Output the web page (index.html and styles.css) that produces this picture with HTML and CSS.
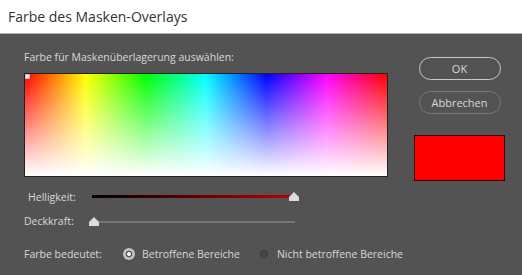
FILE: index.html
```html
<!DOCTYPE html>
<html lang="de">
<head>
  <meta charset="UTF-8">
  <title>Farbe des Masken-Overlays</title>
  <link rel="stylesheet" href="styles.css">
</head>
<body>
  <div class="dialog">
    <div class="titlebar">Farbe des Masken-Overlays</div>
    <div class="content">
      <div class="top">
        <div class="picker">
          <div class="label">Farbe für Maskenüberlagerung auswählen:</div>
          <div class="field">
            <div class="marker"></div>
          </div>
        </div>
        <div class="side">
          <button class="btn primary">OK</button>
          <button class="btn">Abbrechen</button>
          <div class="swatch"></div>
        </div>
      </div>

      <div class="row bright">
        <span class="row-label indent">Helligkeit:</span>
        <div class="slider">
          <div class="track dark"></div>
          <div class="thumb end"></div>
        </div>
      </div>
      <div class="row opacity">
        <span class="row-label">Deckkraft:</span>
        <div class="slider">
          <div class="track thin"></div>
          <div class="thumb start"></div>
        </div>
      </div>

      <div class="row meaning">
        <span class="row-label wide">Farbe bedeutet:</span>
        <label class="radio"><span class="dot on"></span>Betroffene Bereiche</label>
        <label class="radio"><span class="dot"></span>Nicht betroffene Bereiche</label>
      </div>
    </div>
  </div>
</body>
</html>
```

FILE: styles.css
```css
:root {
  --bg: #535353;
  --text: #d8d8d8;
  --font: "Open Sans", "Noto Sans", sans-serif;
}

body {
  margin: 0;
  width: 522px;
  height: 275px;
  overflow: hidden;
  background: var(--bg);
  font-family: var(--font);
  color: var(--text);
}

.titlebar {
  height: 33px;
  line-height: 33px;
  padding-left: 8px;
  background: #fff;
  color: #333;
  font-size: 14px;
  border-bottom: 1px solid #b0b0b0;
}

.content { padding: 16px 0 0 24px; font-size: 10.5px; }

.top { display: flex; height: 131px; }
.picker { width: 364px; }
.label { height: 14px; line-height: 14px; margin-bottom: 9px; }

.field {
  position: relative;
  height: 102px;
  border: 1px solid #222;
  background:
    linear-gradient(to bottom, rgba(255,255,255,0) 0%, rgba(255,255,255,0.4) 40%, #fff 100%),
    linear-gradient(to right, #f00 0%, #ff0 16.7%, #0f0 33.3%, #0ff 50%, #00f 66.7%, #f0f 83.3%, #f00 100%);
}
.marker {
  position: absolute;
  left: 0;
  top: 0;
  width: 3px;
  height: 3px;
  border: 1px solid #e8b0b0;
  background: #fff;
}

.side {
  width: 91px;
  margin-left: 26px;
  padding-top: 7px;
  display: flex;
  flex-direction: column;
  align-items: center;
}
.btn {
  width: 82px;
  height: 23px;
  border-radius: 12px;
  border: 1px solid #7a7a7a;
  background: transparent;
  color: var(--text);
  font-family: var(--font);
  font-size: 11px;
  padding: 0;
  margin-bottom: 11px;
}
.btn.primary { border: 1.5px solid #c8c8c8; }
.swatch {
  width: 89px;
  height: 44px;
  margin-top: 10px;
  background: #f00;
  border: 1px solid #3a0000;
}

.row { display: flex; align-items: center; height: 16px; }
.bright { margin-top: 8px; }
.opacity { margin-top: 8px; }
.meaning { margin-top: 17px; }

.row-label { width: 68px; }
.row-label.indent { width: 64px; padding-left: 4px; }
.row-label.wide { width: 99px; }

.slider { position: relative; width: 206px; height: 16px; }
.track { position: absolute; left: 0; right: 3px; }
.track.dark {
  top: 6px;
  height: 3px;
  background: linear-gradient(to right, #000, #3a0000 30%, #c00000);
}
.track.thin { top: 8px; height: 2px; background: #757575; }

.thumb {
  position: absolute;
  top: 3px;
  width: 10px;
  height: 9px;
  background: #dcdcdc;
  clip-path: polygon(50% 0, 100% 55%, 100% 100%, 0 100%, 0 55%);
}
.thumb.end { left: 197px; }
.thumb.start { left: -3px; top: 4px; }

.radio { display: flex; align-items: center; margin-right: 18px; }
.dot {
  width: 12px;
  height: 12px;
  border-radius: 50%;
  margin-right: 7px;
  background: #454545;
  border: 1px solid #5e5e5e;
  box-sizing: border-box;
}
.dot.on {
  border: 0;
  background: radial-gradient(circle, #f0f0f0 0 1.8px, #5a5a5a 2.2px 3.2px, #c4c4c4 3.7px);
}
```
